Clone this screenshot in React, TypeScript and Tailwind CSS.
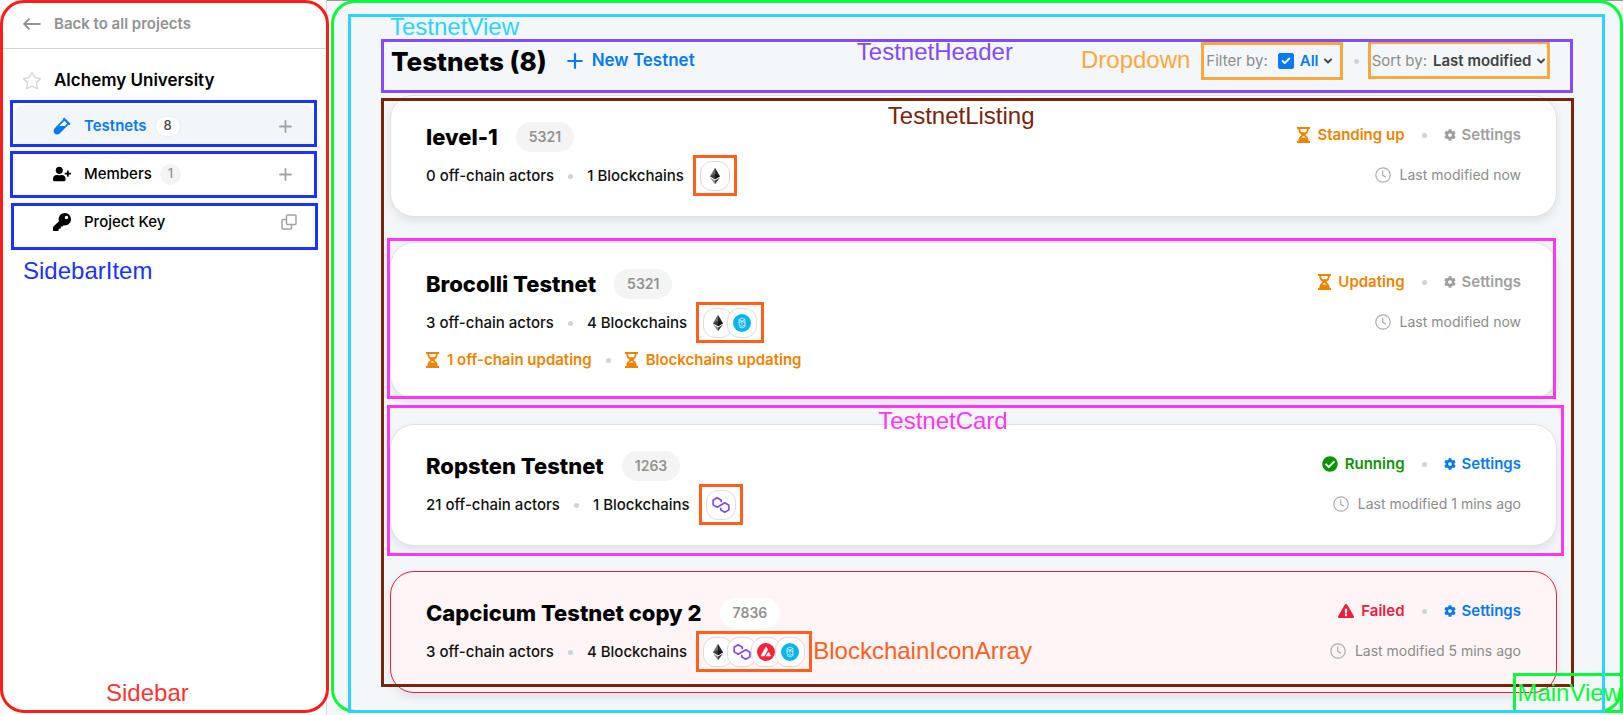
import { useState, type ReactNode } from "react";
import { FaVial, FaUserPlus, FaKey, FaCog, FaCheckCircle, FaExclamationTriangle } from "react-icons/fa";
import { Check, ChevronDown, Star } from "lucide-react";

type Chain = "eth" | "polygon" | "avax" | "fantom";
type Status = "Standing up" | "Updating" | "Running" | "Failed";

function Outline({ className }: { className: string }) {
  return <div aria-hidden="true" className={`pointer-events-none absolute z-10 border-3 ${className}`} />;
}

function Note({ className, children }: { className: string; children: ReactNode }) {
  return (
    <span
      className={`pointer-events-none absolute z-20 font-['Liberation_Sans',Arial,sans-serif] text-2xl leading-6 font-normal whitespace-nowrap ${className}`}
    >
      {children}
    </span>
  );
}

function Dot({ className = "" }: { className?: string }) {
  return <span className={`size-[5px] shrink-0 rounded-full bg-[#cdd3d9] ${className}`} />;
}

function PlusIcon({ className }: { className: string }) {
  return (
    <svg viewBox="0 0 16 16" className={className} fill="none" stroke="currentColor" strokeWidth="2.200" strokeLinecap="round">
      <path d="M8 1.200v13.600M1.200 8h13.600" />
    </svg>
  );
}

function BackArrow() {
  return (
    <svg viewBox="0 0 18 12" className="h-3 w-[18px]" fill="none" stroke="currentColor" strokeWidth="1.900" strokeLinecap="round" strokeLinejoin="round">
      <path d="M16.800 6H1.200M6 1.200 1.200 6 6 10.800" />
    </svg>
  );
}

function Hourglass() {
  return (
    <svg viewBox="0 0 13 16" className="h-4 w-[13px] shrink-0" fill="none" stroke="currentColor">
      <path d="M0 1h13M0 15h13" strokeWidth="2" />
      <path d="M2.200 2c0 3.200 1.300 4.600 4.300 6c-3 1.400-4.300 2.800-4.300 6M10.800 2c0 3.200-1.300 4.600-4.300 6c3 1.400 4.300 2.800 4.300 6" strokeWidth="1.800" />
      <path d="M3.500 5.300h6L6.500 8.500zM2 14.500c.3-1.900.8-3 1.600-3.900h5.800c.8.900 1.300 2 1.600 3.900z" fill="currentColor" stroke="none" />
    </svg>
  );
}

function Clock() {
  return (
    <svg viewBox="0 0 16 16" className="size-4 shrink-0" fill="none" stroke="#adadad" strokeWidth="1.200" strokeLinecap="round">
      <circle cx="8" cy="8" r="7.200" />
      <path d="M7.700 3.800V8.300L10.600 10" />
    </svg>
  );
}

function CopyIcon() {
  return (
    <svg viewBox="0 0 16 16" className="size-4" fill="none" stroke="currentColor" strokeWidth="1.500" strokeLinejoin="round">
      <rect x="5.500" y="1" width="9.500" height="9.500" rx="1" />
      <path d="M5.500 5.500H2a1 1 0 0 0-1 1V14a1 1 0 0 0 1 1h7.500a1 1 0 0 0 1-1v-3.500" />
    </svg>
  );
}

function ChainIcon({ chain }: { chain: Chain }) {
  switch (chain) {
    case "eth":
      return (
        <svg viewBox="0 0 18 18" className="size-[18px]">
          <path d="M9 .8 4 9.200 9 12.200z" fill="#6b6b6b" />
          <path d="M9 .8v11.400l5-3z" fill="#2b2b2b" />
          <path d="M4 9.200 9 7v5.200z" fill="#3c3c3b" />
          <path d="M14 9.200 9 7v5.200z" fill="#141414" />
          <path d="M4 10.400 9 17.300v-3.900z" fill="#8c8c8c" />
          <path d="M14 10.400 9 17.300v-3.900z" fill="#3c3c3b" />
        </svg>
      );
    case "polygon":
      return (
        <svg viewBox="0 0 18 18" className="size-[18px]" fill="none" stroke="#8247e5" strokeWidth="1.600" strokeLinejoin="round">
          <path d="M9.300 6.300V4.200L5.200 1.800 1.100 4.200v4.700l4.100 2.400 7.600-4.500 4.100 2.400v4.700l-4.100 2.400-4.100-2.400v-2.200" />
        </svg>
      );
    case "avax":
      return (
        <svg viewBox="0 0 18 18" className="size-[18px]">
          <circle cx="9" cy="9" r="9" fill="#fb2139" />
          <path d="M8.500 4.200c.3-.5.800-.5 1.100 0l1 1.900c.3.500.3.900 0 1.400l-3 5.200c-.3.400-.6.600-1.100.6H4.400c-.6 0-.9-.4-.6-.9zM10.900 9.500c.3-.5.800-.5 1.100 0l1.900 2.900c.3.500 0 .9-.6.900H9.600c-.6 0-.9-.4-.6-.9z" fill="#fff" />
        </svg>
      );
    case "fantom":
      return (
        <svg viewBox="0 0 18 18" className="size-[18px]">
          <circle cx="9" cy="9" r="9" fill="#07b4ec" />
          <path d="M6 5.500 9 4l3 1.500v7L9 14l-3-1.500M6 5.500l6 3.400M12 5.500 6 8.900M9 7.200v3.500M6 8.900v2l3 1.500 3-1.500M6 5.500v3.400" fill="none" stroke="#fff" strokeWidth=".7" strokeLinejoin="round" />
        </svg>
      );
  }
}

function BlockchainIconArray({ chains, label }: { chains: Chain[]; label?: boolean }) {
  return (
    <div className="relative ml-4 flex">
      {chains.map((chain) => (
        <span
          key={chain}
          className="-ml-1.5 flex size-[30px] items-center justify-center rounded-xl border border-[#dcdcdc] bg-white first:ml-0"
        >
          <ChainIcon chain={chain} />
        </span>
      ))}
      <Outline className="-inset-x-[7px] -top-1.5 -bottom-[5px] border-[#fe601e]" />
      {label && <Note className="top-0.5 left-full ml-2 text-[#fe601e]">BlockchainIconArray</Note>}
    </div>
  );
}

const statusStyle: Record<Status, string> = {
  "Standing up": "text-[#ed8400]",
  Updating: "text-[#ed8400]",
  Running: "text-[#0a9405]",
  Failed: "text-[#e8203f]",
};

function StatusIcon({ status }: { status: Status }) {
  if (status === "Running") return <FaCheckCircle className="size-4" />;
  if (status === "Failed") return <FaExclamationTriangle className="size-4" />;
  return <Hourglass />;
}

type CardProps = {
  name: string;
  id: string;
  actors: string;
  blockchains: string;
  chains: Chain[];
  status: Status;
  modified: string;
  updates?: string[];
  chainsLabel?: boolean;
  children?: ReactNode;
};

function TestnetCard({ name, id, actors, blockchains, chains, status, modified, updates, chainsLabel, children }: CardProps) {
  const failed = status === "Failed";
  const ready = failed || status === "Running";
  return (
    <article
      className={`relative flex justify-between rounded-3xl border px-[35px] pt-[26px] pb-[25px] shadow-[0_4px_8px_rgba(40,50,60,0.10)] ${
        failed ? "border-[#e8203f] bg-[#fff4f6]" : "border-[#e2e2e2] bg-white"
      }`}
    >
      <div className="flex flex-col gap-[9px]">
        <div className="flex h-[30px] items-center gap-[18px]">
          <h2 className="text-[22px] font-extrabold text-black">{name}</h2>
          <span
            className={`flex h-[30px] items-center rounded-full px-[13px] text-sm font-semibold text-[#929292] ${
              failed ? "bg-white" : "bg-[#f4f4f4]"
            }`}
          >
            {id}
          </span>
        </div>
        <div className="flex h-[30px] items-center text-[15px] font-medium text-[#111]">
          <span>{actors}</span>
          <Dot className="mx-3.5" />
          <span>{blockchains}</span>
          <BlockchainIconArray chains={chains} label={chainsLabel} />
        </div>
        {updates && (
          <div className="flex h-[26px] items-center text-[15px] font-semibold text-[#ed8400]">
            <Hourglass />
            <span className="ml-2">{updates[0]}</span>
            <Dot className="mx-3.5" />
            <Hourglass />
            <span className="ml-2">{updates[1]}</span>
          </div>
        )}
      </div>
      <div className="flex flex-col items-end gap-3">
        <div className="flex h-[26px] items-center text-[15px] font-semibold">
          <span className={`flex items-center gap-[7px] ${statusStyle[status]}`}>
            <StatusIcon status={status} />
            {status}
          </span>
          <Dot className="mx-[17px]" />
          <button type="button" className={`flex items-center gap-1.5 ${ready ? "text-[#067bf0]" : "text-[#9f9f9f]"}`}>
            <FaCog className="size-3" />
            Settings
          </button>
        </div>
        <p className="flex h-[30px] items-center gap-[9px] text-sm text-[#8c8c8c]">
          <Clock />
          {modified}
        </p>
      </div>
      {children}
    </article>
  );
}

function SidebarItem({ icon, label, count, active, action, actionLabel, outline }: {
  icon: ReactNode;
  label: string;
  count?: string;
  active?: boolean;
  action: ReactNode;
  actionLabel: string;
  outline: string;
}) {
  return (
    <li className={`relative mr-[13px] ml-[15px] flex h-[42px] items-center rounded-lg pr-4 pl-[38px] ${active ? "bg-[#f2f6f9]" : ""}`}>
      <a href="#" className={`flex items-center text-[15px] ${active ? "font-semibold text-[#067bf0]" : "font-medium text-black"}`}>
        <span className="w-[31px]">{icon}</span>
        {label}
        {count && (
          <span
            className={`ml-2 flex h-[21px] items-center rounded-full px-2 text-[13px] font-medium ${
              active ? "border border-[#ebebeb] bg-white text-[#4c4c4c]" : "bg-[#f4f4f4] text-[#929292]"
            }`}
          >
            {count}
          </span>
        )}
      </a>
      <button type="button" aria-label={actionLabel} className="ml-auto flex min-w-6 justify-center text-[#a3a3a3]">
        {action}
      </button>
      <Outline className={`h-[47px] border-[#1a34fb] ${outline}`} />
    </li>
  );
}

function Sidebar() {
  return (
    <aside className="relative w-[327px] shrink-0 border-r border-[#d6d8da] bg-white">
      <a href="#" className="flex h-12 items-center gap-[13px] pl-[23px] text-[15px] font-semibold text-[#929292]">
        <BackArrow />
        Back to all projects
      </a>
      <div className="flex h-[57px] items-center gap-3 border-t border-[#d4d4d4] pt-2 pl-[22px]">
        <Star className="size-5 text-[#d4d4d4]" strokeWidth={1.5} />
        <h2 className="text-[17px] font-semibold text-black">Alchemy University</h2>
      </div>
      <ul className="flex flex-col gap-1.5">
        <SidebarItem
          active
          icon={<FaVial className="size-[18px]" />}
          label="Testnets"
          count="8"
          actionLabel="Add testnet"
          action={<PlusIcon className="size-[13px]" />}
          outline="-top-[5px] -right-1 -left-[5px]"
        />
        <SidebarItem
          icon={<FaUserPlus className="size-[18px]" />}
          label="Members"
          count="1"
          actionLabel="Add member"
          action={<PlusIcon className="size-[13px]" />}
          outline="-top-0.5 -right-1 -left-[5px]"
        />
        <SidebarItem
          icon={<FaKey className="size-[18px]" />}
          label="Project Key"
          actionLabel="Copy project key"
          action={
            <span className="pl-2">
              <CopyIcon />
            </span>
          }
          outline="top-0.5 -right-[5px] -left-1"
        />
      </ul>
      <Note className="top-[259px] left-[23px] text-[#1a34fb]">SidebarItem</Note>
      <Outline className="top-0 -right-[3px] bottom-0.5 left-0 rounded-3xl border-[#fd1c1c]" />
      <Note className="bottom-2.5 left-[106px] text-[#fd3434]">Sidebar</Note>
    </aside>
  );
}

function TestnetHeader() {
  const [checked, setChecked] = useState(true);
  return (
    <header className="relative flex h-10 items-center">
      <h1 className="ml-px text-[26px] font-extrabold text-black">Testnets (8)</h1>
      <button type="button" className="ml-5 flex items-center gap-[9px] text-[17px] font-semibold text-[#067bf0]">
        <PlusIcon className="size-4" />
        New Testnet
      </button>
      <div className="relative mr-5 ml-auto flex items-center text-[15px]">
        <label htmlFor="filter" className="text-[#8c8c8c]">Filter by:</label>
        <span className="relative ml-2.5 flex">
          <input
            type="checkbox"
            aria-label="Show all"
            checked={checked}
            onChange={(e) => setChecked(e.target.checked)}
            className="size-4 appearance-none rounded-xs border border-[#067bf0] bg-white checked:bg-[#067bf0]"
          />
          <Check className="pointer-events-none absolute top-[3px] left-[3px] size-2.5 text-white" strokeWidth={4.5} />
        </span>
        <select id="filter" className="ml-1.5 appearance-none bg-transparent font-semibold text-[#067bf0]">
          <option>All</option>
        </select>
        <ChevronDown className="ml-[3px] size-3 text-[#4a4a4a]" strokeWidth={4} />
        <Outline className="-top-2 -right-[9px] -bottom-2 -left-[5px] border-[#fea742]" />
        <Note className="-top-0.5 right-full mr-4 text-[#fea742]">Dropdown</Note>
      </div>
      <Dot />
      <div className="relative mr-2.5 ml-[13px] flex items-center text-[15px]">
        <label htmlFor="sort" className="text-[#8c8c8c]">Sort by:</label>
        <select id="sort" className="ml-1.5 appearance-none bg-transparent font-semibold text-[#424242]">
          <option>Last modified</option>
        </select>
        <ChevronDown className="ml-[3px] size-3 text-[#4a4a4a]" strokeWidth={4} />
        <Outline className="-top-[9px] -right-[3px] -bottom-[7px] -left-1 border-[#fea742]" />
      </div>
      <Outline className="-top-0.5 -right-4 -bottom-3 -left-[9px] border-[#844bf9]" />
      <Note className="-top-px left-[40%] text-[#844bf9]">TestnetHeader</Note>
    </header>
  );
}

function TestnetListing() {
  return (
    <section className="relative mt-[14px] flex flex-col gap-[25px]">
      <TestnetCard name="level-1" id="5321" actors="0 off-chain actors" blockchains="1 Blockchains" chains={["eth"]} status="Standing up" modified="Last modified now" />
      <TestnetCard
        name="Brocolli Testnet"
        id="5321"
        actors="3 off-chain actors"
        blockchains="4 Blockchains"
        chains={["eth", "fantom"]}
        status="Updating"
        modified="Last modified now"
        updates={["1 off-chain updating", "Blockchains updating"]}
      >
        <Outline className="-top-[5px] right-0 -bottom-px -left-1 border-[#fd37f3]" />
      </TestnetCard>
      <TestnetCard name="Ropsten Testnet" id="1263" actors="21 off-chain actors" blockchains="1 Blockchains" chains={["polygon"]} status="Running" modified="Last modified 1 mins ago">
        <Outline className="-top-5 -right-2 -bottom-[11px] -left-1 border-[#fd37f3]" />
        <Note className="-top-4 left-[42%] -ml-0.5 text-[#fd37f3]">TestnetCard</Note>
      </TestnetCard>
      <TestnetCard
        name="Capcicum Testnet copy 2"
        id="7836"
        actors="3 off-chain actors"
        blockchains="4 Blockchains"
        chains={["eth", "polygon", "avax", "fantom"]}
        status="Failed"
        modified="Last modified 5 mins ago"
        chainsLabel
      />
      <Outline className="top-[3px] -right-[17px] bottom-1.5 -left-[9px] border-[#79250d]" />
      <Note className="top-[9px] left-[43%] -ml-1 text-[#79250d]">TestnetListing</Note>
    </section>
  );
}

export default function App() {
  return (
    <div className="flex min-h-screen bg-[#f3f7fa] font-[Inter,sans-serif] shadow-[inset_0_1px_0_#999]">
      <Sidebar />
      <main className="relative min-w-0 flex-1 pt-[41px] pr-[66px] pb-5 pl-[63px]">
        <TestnetHeader />
        <TestnetListing />
        <Outline className="top-0 right-0 bottom-0.5 left-1 rounded-3xl border-[#06fb3a]" />
        <Outline className="right-0 bottom-0.5 h-10 w-[110px] border-[#06fb3a]" />
        <Note className="right-0.5 bottom-2.5 text-[#06fb3a]">MainView</Note>
        <Outline className="top-[14px] right-[18px] bottom-0.5 left-[21px] border-[#2dd3fd]" />
        <Note className="top-[15px] left-[63px] text-[#2dd3fd]">TestnetView</Note>
      </main>
    </div>
  );
}
